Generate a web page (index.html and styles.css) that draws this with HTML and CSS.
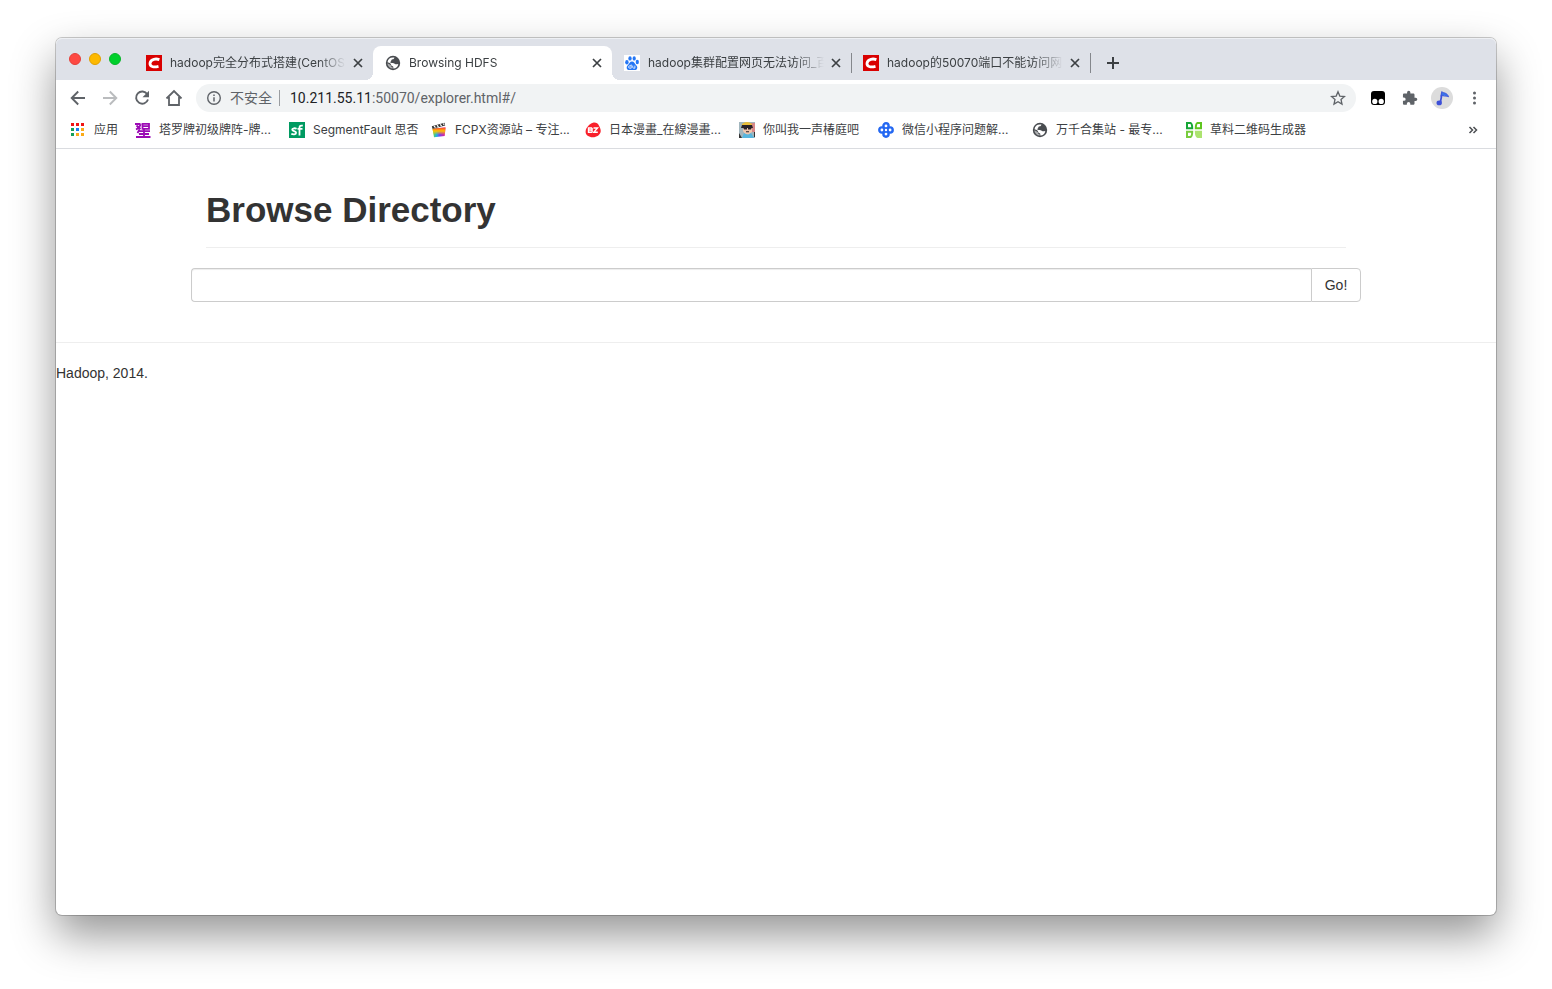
FILE: index.html
```html
<!DOCTYPE html>
<html lang="zh-CN">
<head>
<meta charset="utf-8">
<meta name="viewport" content="width=device-width, initial-scale=1">
<title>Browsing HDFS</title>
<link rel="stylesheet" href="styles.css">
</head>
<body>
<svg class="defs" aria-hidden="true">
  <symbol id="close" viewBox="0 0 16 16"><path d="M4 4l8 8M12 4l-8 8" fill="none" stroke="#3c4043" stroke-width="1.7"/></symbol>
  <symbol id="csdn" viewBox="0 0 16 16"><path fill="#d90000" d="M0 0h16v16H0z"/><path d="M13.400 4.600C10.500 3.600 4.700 3.500 4 8.200c-.4 4.200 4.600 4.200 8.500 3.200" fill="none" stroke="#fff" stroke-width="2.800"/></symbol>
  <symbol id="globe" viewBox="0 0 16 16"><circle cx="8" cy="8" r="7.200" fill="#494c50"/><path d="M9.400 2.500c-.2 1.300-.8 1.700-1.700 1.800-.9.100-1.500.8-1.500 1.500 0 .8-.9.600-.9 1.500 0 .7.700.7 2.400.7 1.500 0 1.900 1.200 3 1.200.7 0 1.700-.3 2.600-.3a5.600 5.600 0 0 1-5 4.700v-1.700c0-.8-1-.9-1.700-1.200-.6-.3-.4-1.300-1-1.900C4.600 7.800 3.500 7.400 2.500 7.300A5.600 5.600 0 0 1 8 2.400z" fill="#fff"/><path d="M2.400 8.200l3.300 1.800.6 1.800 1.500.7v1.100A5.600 5.600 0 0 1 2.400 8.200z" fill="#fff" opacity=".55"/></symbol>
</svg>
<div class="window">
  <header class="tabstrip">
    <div class="lights">
      <button class="light red" aria-label="关闭窗口"></button>
      <button class="light yellow" aria-label="最小化"></button>
      <button class="light green" aria-label="缩放"></button>
    </div>
    <nav class="tabs">
      <div class="tab">
        <svg class="icon"><use href="#csdn"/></svg>
        <a class="tab-title" href="#">hadoop完全分布式搭建(CentOS7)</a>
        <button class="close" aria-label="关闭标签页"><svg class="icon"><use href="#close"/></svg></button>
      </div>
      <div class="tab active">
        <svg class="icon"><use href="#globe"/></svg>
        <a class="tab-title" href="#">Browsing HDFS</a>
        <button class="close" aria-label="关闭标签页"><svg class="icon"><use href="#close"/></svg></button>
      </div>
      <div class="tab divided">
        <svg class="icon" viewBox="0 0 16 16"><path fill="#fff" d="M0 0h16v16H0z"/><g fill="#2577f5"><ellipse cx="2.900" cy="7.200" rx="1.700" ry="2.200"/><ellipse cx="6" cy="3.400" rx="1.700" ry="2.200"/><ellipse cx="10.200" cy="3.400" rx="1.600" ry="2.200"/><ellipse cx="13.300" cy="7" rx="1.600" ry="2.200"/><path d="M8 6.600c2.300 0 2.500 2.200 4.200 3.600 2 1.800 1.200 4.900-1.600 4.900H5.400c-2.800 0-3.600-3-1.600-4.900C5.500 8.800 5.700 6.600 8 6.600z"/></g><path d="M7.200 9.500v3.700H5.800a1.200 1.200 0 1 1 0-2.400h1.400M8.700 10.600v1.700q0 .9 1 .9h1.200v-2.600" fill="none" stroke="#fff" stroke-width=".8"/></svg>
        <a class="tab-title" href="#">hadoop集群配置网页无法访问_百度搜索</a>
        <button class="close" aria-label="关闭标签页"><svg class="icon"><use href="#close"/></svg></button>
      </div>
      <div class="tab divided">
        <svg class="icon"><use href="#csdn"/></svg>
        <a class="tab-title" href="#">hadoop的50070端口不能访问网页</a>
        <button class="close" aria-label="关闭标签页"><svg class="icon"><use href="#close"/></svg></button>
      </div>
    </nav>
    <button class="new-tab" aria-label="新标签页"><svg class="icon" viewBox="0 0 16 16"><path d="M8 2v12M2 8h12" stroke="#3c4043" stroke-width="2"/></svg></button>
  </header>

  <div class="toolbar">
    <button class="tool" aria-label="后退"><svg class="tool-icon" viewBox="0 0 20 20"><path d="M17 10H4M10.200 3.500L3.700 10l6.500 6.500" fill="none" stroke="#5f6368" stroke-width="1.900"/></svg></button>
    <button class="tool" aria-label="前进"><svg class="tool-icon" viewBox="0 0 20 20"><path d="M3 10h13M9.800 3.500l6.500 6.500-6.500 6.500" fill="none" stroke="#babcbe" stroke-width="1.900"/></svg></button>
    <button class="tool" aria-label="重新加载"><svg class="tool-icon" viewBox="0 0 20 20"><path d="M15.300 6.200A6.100 6.100 0 1 0 16 11.500" fill="none" stroke="#5f6368" stroke-width="1.900"/><path d="M17 2.700v6.500h-6.500z" fill="#5f6368"/></svg></button>
    <button class="tool" aria-label="主页"><svg class="tool-icon" viewBox="0 0 20 20"><path d="M2.500 10.500L10 3l7.500 7.500M5 9v8h10V9" fill="none" stroke="#5f6368" stroke-width="1.800"/></svg></button>
    <div class="omnibox">
      <svg class="icon" viewBox="0 0 16 16"><circle cx="8" cy="8" r="6.300" fill="none" stroke="#5f6368" stroke-width="1.400"/><path d="M8 7.200v4.300M8 4.400V6" stroke="#5f6368" stroke-width="1.500"/></svg>
      <span class="security">不安全</span>
      <div class="url" role="textbox" contenteditable="true" spellcheck="false" aria-label="地址栏"><span class="host">10.211.55.11</span>:50070/explorer.html#/</div>
      <button class="star" aria-label="收藏"><svg class="icon" viewBox="0 0 16 16"><path d="M8 1.800l1.800 4.300 4.700.4-3.500 3 1 4.600-4-2.400-4 2.400 1-4.600-3.500-3 4.700-.4z" fill="none" stroke="#5f6368" stroke-width="1.300"/></svg></button>
    </div>
    <div class="actions">
      <button class="tool" aria-label="Tampermonkey"><svg class="icon" viewBox="0 0 16 16"><rect x="1" y="1" width="14" height="14" rx="3"/><circle cx="4.800" cy="11.400" r="2.600" fill="#fff"/><circle cx="11.200" cy="11.400" r="2.600" fill="#fff"/></svg></button>
      <button class="tool" aria-label="扩展程序"><svg class="puzzle" viewBox="0 0 24 24"><path fill="#5f6368" d="M19.500 11.500H18V7.700c0-1-.8-1.700-1.700-1.700h-3.800V4.500a2.200 2.200 0 0 0-4.400 0V6H4.300C3.400 6 2.600 6.700 2.600 7.700v3.500h1.300a2.300 2.300 0 0 1 0 4.600H2.600v3.500c0 1 .8 1.700 1.700 1.700h3.500v-1.400a2.300 2.300 0 0 1 4.600 0V21h3.900c.9 0 1.700-.7 1.700-1.700V16h1.500a2.200 2.200 0 0 0 0-4.500z"/></svg></button>
      <button class="tool" aria-label="用户"><svg class="avatar" viewBox="0 0 22 22"><circle cx="11" cy="11" r="11" fill="#dcdcdc"/><path d="M9.300 15.500L11.200 6" fill="none" stroke="#3d50d8" stroke-width="1.700"/><path d="M10.700 4.600c1.800 1.700 5.200.6 7 5.200-2.400-1-4.800-.2-6.600-1.500l-1.300 1z" fill="#3b74e8" stroke="#3d50d8" stroke-width=".8"/><ellipse cx="8.200" cy="15.900" rx="2.700" ry="2.400" fill="#3d50d8"/></svg></button>
      <button class="tool" aria-label="菜单"><svg class="icon" viewBox="0 0 16 16"><g fill="#5f6368"><circle cx="8.500" cy="3" r="1.500"/><circle cx="8.500" cy="8" r="1.500"/><circle cx="8.500" cy="13" r="1.500"/></g></svg></button>
    </div>
  </div>

  <nav class="bookmarks">
    <a class="bookmark" href="#"><svg class="icon" viewBox="0 0 16 16"><path fill="#f01414" d="M1 1h3v3H1zM6 1h3v3H6zM11 1h3v3h-3z"/><path fill="#15a05b" d="M1 6h3v3H1zM1 11h3v3H1z"/><path fill="#1a7df0" d="M6 6h3v3H6z"/><path fill="#fbab18" d="M11 6h3v3h-3zM6 11h3v3H6zM11 11h3v3h-3z"/></svg>应用</a>
    <a class="bookmark" href="#"><svg class="icon" viewBox="0 0 16 16"><path d="M0 2h5.500M5.500 2Q5 5.500 1 7.500M1.500 3.500L5.500 7M7.500 1.800h6.500v5H7.500zM7.500 4.200h6M4.500 7.500L2.500 11M3.500 9.200h11.500M9 7v8M4 12h10M1 15h14.500" fill="none" stroke="#9c0bb5" stroke-width="1.800"/></svg>塔罗牌初级牌阵-牌...</a>
    <a class="bookmark" href="#"><svg class="icon" viewBox="0 0 16 16"><path fill="#009a61" d="M0 0h16v16H0z"/><path d="M7.600 6.800c-1.500-.8-4.400-.8-4.400.8 0 2 3.900 1 3.900 3.200 0 2-3.300 1.900-4.800 1M10.500 13.500v-8q0-2.300 3.300-1.800M8.500 6.800h5" fill="none" stroke="#fff" stroke-width="1.800"/></svg>SegmentFault 思否</a>
    <a class="bookmark" href="#"><svg class="icon" viewBox="0 0 16 16"><defs><linearGradient id="hue"><stop stop-color="#7ed321"/><stop offset=".3" stop-color="#17b7e8"/><stop offset=".55" stop-color="#7a3df0"/><stop offset="1" stop-color="#f0208a"/></linearGradient><linearGradient id="warm" x2="0" y2="1"><stop stop-color="#ff3b30"/><stop offset=".35" stop-color="#ffc400"/><stop offset=".75" stop-color="#ffc400" stop-opacity="0"/></linearGradient></defs><path d="M1.500 6.500l13-1-.8 8.500-10.700 1.300z" fill="url(#hue)"/><path d="M1.500 6.500l13-1-.8 8.500-10.700 1.300z" fill="url(#warm)"/><path d="M.8 4.200L13.500.8l.7 2.700L1.500 6.700z" fill="#333"/><path d="M3 4l1.500 1.700M6 3.200L7.500 5M9.200 2.300l1.500 1.800M12.200 1.500l1 1.400" stroke="#fff" stroke-width="1.200"/></svg>FCPX资源站 – 专注...</a>
    <a class="bookmark" href="#"><svg class="icon" viewBox="0 0 16 16"><path d="M8 .7c2.600-.6 5 .6 6 3 .8 1.800 2 3.600 1.700 5.700-.5 3.400-4 5.700-7.800 5.800C4 15.300.5 13 .6 9.700.6 7 2 5.300 3.400 3.800 4.600 2.400 6 1 8 .7z" fill="#f9202b"/><path d="M3.500 6h3l.8 1-.8 1 .8 1-.8 1.300h-3zM3.500 8H6M8.500 6h4l-3.700 4.200h4" fill="none" stroke="#fff" stroke-width="1.400"/></svg>日本漫畫_在線漫畫...</a>
    <a class="bookmark" href="#"><svg class="icon" viewBox="0 0 16 16"><path fill="#a2b6be" d="M0 0h16v16H0z"/><path fill="#d88889" d="M12 1h4v9h-4z"/><path fill="#efc6ad" d="M4 4h9v6l-3 2H6L4 9z"/><path fill="#e9bd37" d="M3 2q5-4 10 0v1H3z"/><path fill="#282127" d="M3 3h10l1 3H2zM4 5h4v2.500H5zM9 5h4l-1 2.500H9zM7 9.200h3v1H7z"/><path fill="#58b6de" d="M3 16l2-5 4 2 3-2 3 5z"/><path fill="#333" d="M0 11l3 5H0zM15 10v5h1v-5z"/></svg>你叫我一声椿庭吧</a>
    <a class="bookmark" href="#"><svg class="icon" viewBox="0 0 16 16"><g fill="#fff" stroke="#2468f2" stroke-width="2.400"><circle cx="8" cy="3.900" r="2.600"/><circle cx="12.100" cy="8" r="2.600"/><circle cx="8" cy="12.100" r="2.600"/><circle cx="3.900" cy="8" r="2.600"/></g><path d="M5.500 5.500l5 5M10.500 5.500l-5 5" stroke="#2468f2" stroke-width="1.600"/><circle cx="8" cy="8" r="1.200" fill="#fff"/></svg>微信小程序问题解...</a>
    <a class="bookmark" href="#"><svg class="icon"><use href="#globe"/></svg>万千合集站 - 最专...</a>
    <a class="bookmark" href="#"><svg class="icon" viewBox="0 0 16 16"><path d="M1 1h3.500Q6.200 1.500 6.200 6.200H1z" fill="none" stroke="#16a637" stroke-width="2"/><path d="M15 1h-3.500Q9.800 1.500 9.800 6.200H15z" fill="none" stroke="#5fc51f" stroke-width="2"/><path d="M1 15h3.500q1.700-.5 1.700-5.200H1z" fill="none" stroke="#78cc3d" stroke-width="2"/><path d="M8.800 8.800H16V16h-4.500q-2.700-1-2.700-7.200z" fill="#ace36f"/></svg>草料二维码生成器</a>
    <button class="more" aria-label="更多书签"><svg class="icon" viewBox="0 0 16 16"><path d="M4.500 5l3 3-3 3M8.500 5l3 3-3 3" fill="none" stroke="#4c4f53" stroke-width="1.500"/></svg></button>
  </nav>

  <main class="page">
    <div class="container">
      <div class="page-header"><h1>Browse Directory</h1></div>
      <form class="row">
        <input class="path" type="text" aria-label="Directory">
        <button class="go" type="button">Go!</button>
      </form>
    </div>
    <footer class="footer"><p>Hadoop, 2014.</p></footer>
  </main>
</div>
</body>
</html>
```

FILE: styles.css
```css
* { box-sizing: border-box; }

body {
  margin: 0;
  min-height: 100vh;
  padding: 38px 56px 74px;
  display: flex;
  background: #fff;
  color: #3c4043;
  font: 12px/16px Inter, "Noto Sans CJK SC", sans-serif;
}

button {
  margin: 0;
  padding: 0;
  border: 0;
  background: none;
  font: inherit;
  color: inherit;
  display: flex;
  align-items: center;
  justify-content: center;
}

a { color: inherit; text-decoration: none; }

.defs { position: absolute; width: 0; height: 0; }
.icon { width: 16px; height: 16px; flex: none; }
.tool-icon { width: 20px; height: 20px; }
.puzzle { width: 18px; height: 18px; }
.avatar { width: 22px; height: 22px; }

.window {
  flex: 1;
  min-width: 0;
  display: flex;
  flex-direction: column;
  border-radius: 6px;
  background: #fff;
  box-shadow: 0 0 0 1px rgba(0, 0, 0, .2), 0 20px 44px rgba(0, 0, 0, .42);
}

/* Tab strip */
.tabstrip {
  height: 42px;
  padding-left: 13px;
  display: flex;
  align-items: center;
  background: #dee1e8;
  border-radius: 6px 6px 0 0;
  box-shadow: inset 0 1px #eef0f4;
}
.lights { display: flex; gap: 8px; margin-right: 13px; }
.light { width: 12px; height: 12px; border-radius: 50%; }
.red { background: #fe4943; border: 1px solid #e5403a; }
.yellow { background: #fdb900; border: 1px solid #e0a000; }
.green { background: #00d02c; border: 1px solid #08b52a; }

.tabs { display: flex; align-self: flex-end; min-width: 0; }
.tab {
  position: relative;
  width: 239px;
  min-width: 0;
  height: 34px;
  padding: 0 7px 0 12px;
  display: flex;
  align-items: center;
}
.tab-title {
  flex: 1;
  min-width: 0;
  margin: 0 4px 0 8px;
  overflow: hidden;
  white-space: nowrap;
  mask-image: linear-gradient(to right, #000 calc(100% - 28px), transparent);
}
.close { width: 16px; height: 16px; }
.active { background: #fff; border-radius: 8px 8px 0 0; }
.active::before,
.active::after {
  content: "";
  position: absolute;
  bottom: 0;
  width: 8px;
  height: 8px;
}
.active::before { right: 100%; background: radial-gradient(circle at 0 0, transparent 8px, #fff 8px); }
.active::after { left: 100%; background: radial-gradient(circle at 100% 0, transparent 8px, #fff 8px); }
.divided::after {
  content: "";
  position: absolute;
  left: 100%;
  top: 7px;
  width: 1px;
  height: 20px;
  background: #84878c;
}
.new-tab { width: 28px; height: 28px; margin: 8px 0 0 9px; }

/* Toolbar */
.toolbar { height: 36px; padding: 0 6px; display: flex; align-items: center; }
.tool { width: 32px; height: 32px; flex: none; }
.actions { display: flex; }
.omnibox {
  flex: 1;
  min-width: 0;
  height: 28px;
  margin: 0 6px;
  padding: 0 10px;
  display: flex;
  align-items: center;
  border-radius: 14px;
  background: #f1f3f4;
  color: #5f6368;
  font-size: 14px;
  line-height: 20px;
}
.security { margin-left: 8px; padding-right: 8px; position: relative; }
.security::after {
  content: "";
  position: absolute;
  right: 0;
  top: 2px;
  width: 1px;
  height: 16px;
  background: #9a9da1;
}
.url {
  flex: 1;
  min-width: 0;
  margin-left: 10px;
  overflow: hidden;
  white-space: nowrap;
  outline: 0;
  font-family: Roboto, sans-serif;
}
.host { color: #202124; }

/* Bookmarks bar */
.bookmarks {
  height: 33px;
  padding: 0 15px 4px 14px;
  display: grid;
  grid-template-columns: 65px 154px 142px 154px 154px 139px 154px 154px auto 1fr;
  align-items: center;
  border-bottom: 1px solid #dadce0;
}
.bookmark { display: flex; align-items: center; gap: 8px; white-space: nowrap; }
.more { width: 16px; height: 16px; justify-self: end; }

/* Page */
.page {
  color: #333;
  font: 14px/20px "Liberation Sans", Arial, sans-serif;
}
.container { width: 100%; max-width: 1170px; margin: 0 auto; }
.page-header {
  margin: 40px 15px 20px;
  padding-bottom: 17px;
  border-bottom: 1px solid #eee;
}
h1 { margin: 0; font-size: 35px; line-height: 41px; font-weight: 700; }
.row { display: flex; }
.path {
  flex: 1;
  min-width: 0;
  height: 34px;
  padding: 6px 12px;
  border: 1px solid #ccc;
  border-right: 0;
  border-radius: 4px 0 0 4px;
  box-shadow: inset 0 1px 1px rgba(0, 0, 0, .075);
  font: inherit;
  outline: 0;
}
.go {
  width: 50px;
  height: 34px;
  border: 1px solid #ccc;
  border-radius: 0 4px 4px 0;
}
.footer { margin-top: 40px; padding-top: 20px; border-top: 1px solid #eee; }
.footer p { margin: 0; }
```
